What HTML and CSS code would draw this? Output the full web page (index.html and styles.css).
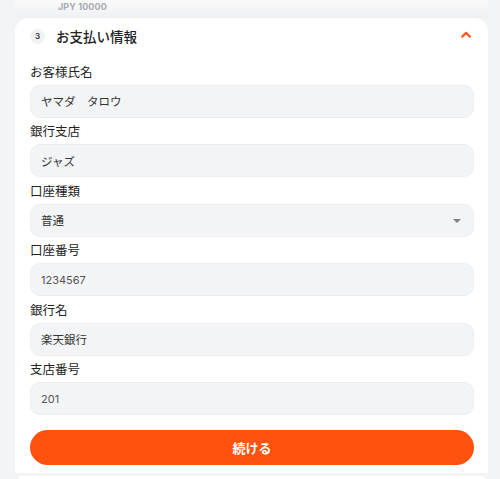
FILE: index.html
```html
<!DOCTYPE html>
<html lang="ja">
<head>
<meta charset="utf-8">
<link rel="stylesheet" href="styles.css">
</head>
<body>
<div class="page">
  <div class="prev">
    <span class="amount">JPY 10000</span>
  </div>
  <section class="card">
    <header class="card-head">
      <span class="step">3</span>
      <h2 class="title">お支払い情報</h2>
      <svg class="chev" width="10" height="7" viewBox="0 0 10 7"><path d="M1.2 5.6 L5 1.8 L8.8 5.6" fill="none" stroke="#ff5a1f" stroke-width="2.2" stroke-linecap="round" stroke-linejoin="round"/></svg>
    </header>
    <div class="fields">
      <div class="field">
        <label class="label">お客様氏名</label>
        <div class="input">ヤマダ　タロウ</div>
      </div>
      <div class="field">
        <label class="label">銀行支店</label>
        <div class="input">ジャズ</div>
      </div>
      <div class="field">
        <label class="label">口座種類</label>
        <div class="input select">普通<span class="caret"></span></div>
      </div>
      <div class="field">
        <label class="label">口座番号</label>
        <div class="input num">1234567</div>
      </div>
      <div class="field">
        <label class="label">銀行名</label>
        <div class="input">楽天銀行</div>
      </div>
      <div class="field">
        <label class="label">支店番号</label>
        <div class="input num">201</div>
      </div>
    </div>
    <button class="btn">続ける</button>
  </section>
  <div class="next"></div>
</div>
</body>
</html>
```
FILE: styles.css
```css
html, body {
  margin: 0;
  padding: 0;
}
body {
  background: #f3f4f6;
  font-family: Inter, "Noto Sans CJK JP", sans-serif;
  color: #222;
  width: 500px;
  height: 479px;
  overflow: hidden;
}
.page {
  padding: 0 12px 0 15px;
  display: flex;
  flex-direction: column;
}
.prev {
  height: 18px;
  background: linear-gradient(#fafafb, #eff0f2);
  display: flex;
  align-items: center;
  padding-left: 43px;
}
.amount {
  font-size: 9px;
  font-weight: 700;
  color: #a7abb2;
  letter-spacing: 0.1px;
  margin-top: -6px;
}
.card {
  background: #fff;
  border-radius: 14px 14px 0 0;
  padding: 0 14px 8px 15px;
  display: flex;
  flex-direction: column;
}
.card-head {
  height: 36px;
  display: flex;
  align-items: center;
  padding-bottom: 1px;
}
.step {
  width: 15px;
  height: 15px;
  border-radius: 50%;
  background: #f1f2f4;
  font-size: 8px;
  font-weight: 600;
  color: #333;
  display: flex;
  align-items: center;
  justify-content: center;
  margin-right: 11px;
}
.title {
  margin: 0;
  font-size: 13.5px;
  font-weight: 500;
  color: #222;
  flex: 1;
}
.chev {
  margin-right: 3px;
  margin-top: -3px;
}
.fields {
  display: flex;
  flex-direction: column;
  gap: 4.6px;
  margin-top: 7.5px;
}
.field {
  display: flex;
  flex-direction: column;
}
.label {
  font-size: 12.5px;
  line-height: 20px;
  color: #222;
  margin-bottom: 2px;
}
.input {
  height: 31px;
  background: #f3f4f6;
  border: 1px solid #eceef1;
  border-radius: 10px;
  display: flex;
  align-items: center;
  padding: 0 10px;
  font-size: 11.5px;
  color: #333;
}
.input.num {
  color: #555;
  font-size: 11px;
}
.select {
  position: relative;
}
.caret {
  position: absolute;
  right: 12px;
  top: 14px;
  width: 0;
  height: 0;
  border-left: 4px solid transparent;
  border-right: 4px solid transparent;
  border-top: 4px solid #7d8087;
}
.btn {
  margin-top: 15px;
  height: 35px;
  border: none;
  border-radius: 18px;
  background: #ff520f;
  color: #fff;
  font-family: Inter, "Noto Sans CJK JP", sans-serif;
  font-size: 13px;
  font-weight: 700;
  cursor: pointer;
}
.next {
  height: 8px;
  background: #fff;
  margin-top: 3px;
  border-radius: 12px 12px 0 0;
}
```
